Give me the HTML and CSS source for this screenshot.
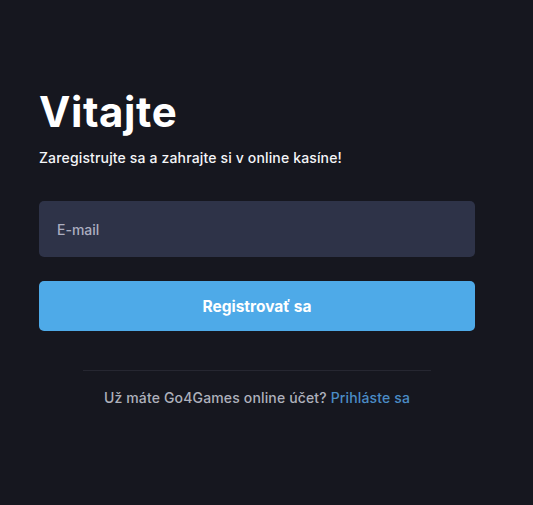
FILE: index.html
```html
<!DOCTYPE html>
<html lang="sk">
<head>
<meta charset="utf-8">
<title>Vitajte</title>
<link rel="stylesheet" href="styles.css">
</head>
<body>
<main class="page">
  <section class="card">
    <h1 class="title">Vitajte</h1>
    <p class="subtitle">Zaregistrujte sa a zahrajte si v online kasíne!</p>
    <form class="form">
      <input class="field" type="email" placeholder="E-mail">
      <button class="submit" type="button">Registrovať sa</button>
    </form>
    <hr class="divider">
    <p class="footer">Už máte Go4Games online účet? <a class="link" href="#">Prihláste sa</a></p>
  </section>
</main>
</body>
</html>
```

FILE: styles.css
```css
html, body {
  margin: 0;
  padding: 0;
  background: #16171f;
  font-family: Inter, "Noto Sans", sans-serif;
  color: #ffffff;
}
.page {
  width: 533px;
  height: 505px;
  box-sizing: border-box;
  padding: 87px 0 0 39px;
}
.card {
  width: 436px;
  display: flex;
  flex-direction: column;
}
.title {
  margin: 0;
  font-size: 42px;
  line-height: 50px;
  font-weight: 700;
  letter-spacing: 0.6px;
}
.subtitle {
  margin: 11px 0 0;
  font-size: 14px;
  line-height: 20px;
  font-weight: 500;
  letter-spacing: 0.15px;
  color: #f4f5f8;
}
.form {
  margin-top: 33px;
  display: flex;
  flex-direction: column;
  gap: 24px;
}
.field {
  height: 56px;
  box-sizing: border-box;
  border: none;
  border-radius: 5px;
  background: #2e3348;
  padding: 0 18px;
  font-family: inherit;
  font-size: 14px;
  font-weight: 500;
  color: #fff;
  outline: none;
}
.field::placeholder {
  color: #abaec0;
}
.submit {
  height: 50px;
  border: none;
  border-radius: 5px;
  background: #4eaae8;
  color: #fff;
  font-family: inherit;
  font-size: 15.5px;
  font-weight: 700;
}
.divider {
  margin: 39px 44px 0;
  border: none;
  height: 1px;
  background: #262731;
}
.footer {
  margin: 17px 0 0;
  text-align: center;
  font-size: 14px;
  line-height: 20px;
  font-weight: 500;
  letter-spacing: 0.15px;
  color: #aeb1bc;
}
.link {
  color: #4b8cc5;
  text-decoration: none;
}
```
